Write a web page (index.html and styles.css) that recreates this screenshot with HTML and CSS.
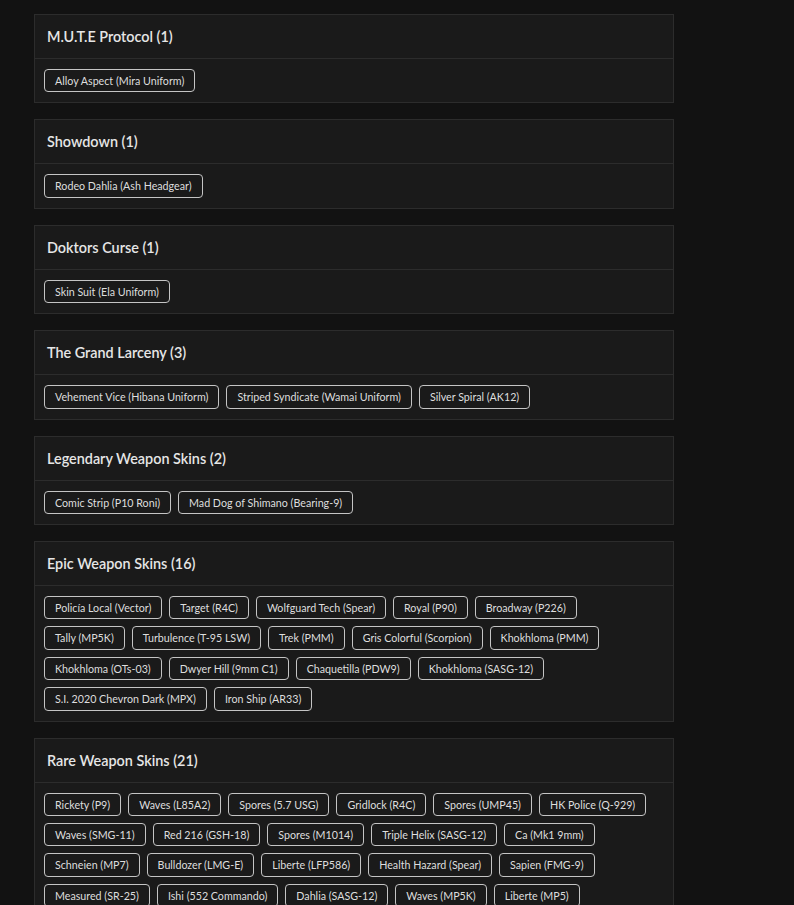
FILE: index.html
```html
<!DOCTYPE html>
<html lang="en">
<head>
    <meta charset="UTF-8">
    <meta name="viewport" content="width=device-width, initial-scale=1.0">
    <title>Item Collection</title>
    <link rel="stylesheet" href="styles.css">
</head>
<body>
    <div class="collection">
        <div class="group">
            <h2 class="group-title">M.U.T.E Protocol (1)</h2>
            <div class="group-items">
                <span class="item">Alloy Aspect (Mira Uniform)</span>
            </div>
        </div>

        <div class="group">
            <h2 class="group-title">Showdown (1)</h2>
            <div class="group-items">
                <span class="item">Rodeo Dahlia (Ash Headgear)</span>
            </div>
        </div>

        <div class="group">
            <h2 class="group-title">Doktors Curse (1)</h2>
            <div class="group-items">
                <span class="item">Skin Suit (Ela Uniform)</span>
            </div>
        </div>

        <div class="group">
            <h2 class="group-title">The Grand Larceny (3)</h2>
            <div class="group-items">
                <span class="item">Vehement Vice (Hibana Uniform)</span>
                <span class="item">Striped Syndicate (Wamai Uniform)</span>
                <span class="item">Silver Spiral (AK12)</span>
            </div>
        </div>

        <div class="group">
            <h2 class="group-title">Legendary Weapon Skins (2)</h2>
            <div class="group-items">
                <span class="item">Comic Strip (P10 Roni)</span>
                <span class="item">Mad Dog of Shimano (Bearing-9)</span>
            </div>
        </div>

        <div class="group">
            <h2 class="group-title">Epic Weapon Skins (16)</h2>
            <div class="group-items">
                <span class="item">Policía Local (Vector)</span>
                <span class="item">Target (R4C)</span>
                <span class="item">Wolfguard Tech (Spear)</span>
                <span class="item">Royal (P90)</span>
                <span class="item">Broadway (P226)</span>
                <span class="item">Tally (MP5K)</span>
                <span class="item">Turbulence (T-95 LSW)</span>
                <span class="item">Trek (PMM)</span>
                <span class="item">Gris Colorful (Scorpion)</span>
                <span class="item">Khokhloma (PMM)</span>
                <span class="item">Khokhloma (OTs-03)</span>
                <span class="item">Dwyer Hill (9mm C1)</span>
                <span class="item">Chaquetilla (PDW9)</span>
                <span class="item">Khokhloma (SASG-12)</span>
                <span class="item">S.I. 2020 Chevron Dark (MPX)</span>
                <span class="item">Iron Ship (AR33)</span>
            </div>
        </div>

        <div class="group">
            <h2 class="group-title">Rare Weapon Skins (21)</h2>
            <div class="group-items">
                <span class="item">Rickety (P9)</span>
                <span class="item">Waves (L85A2)</span>
                <span class="item">Spores (5.7 USG)</span>
                <span class="item">Gridlock (R4C)</span>
                <span class="item">Spores (UMP45)</span>
                <span class="item">HK Police (Q-929)</span>
                <span class="item">Waves (SMG-11)</span>
                <span class="item">Red 216 (GSH-18)</span>
                <span class="item">Spores (M1014)</span>
                <span class="item">Triple Helix (SASG-12)</span>
                <span class="item">Ca (Mk1 9mm)</span>
                <span class="item">Schneien (MP7)</span>
                <span class="item">Bulldozer (LMG-E)</span>
                <span class="item">Liberte (LFP586)</span>
                <span class="item">Health Hazard (Spear)</span>
                <span class="item">Sapien (FMG-9)</span>
                <span class="item">Measured (SR-25)</span>
                <span class="item">Ishi (552 Commando)</span>
                <span class="item">Dahlia (SASG-12)</span>
                <span class="item">Waves (MP5K)</span>
                <span class="item">Liberte (MP5)</span>
            </div>
        </div>
    </div>
</body>
</html>
```

FILE: styles.css
```css
* {
    margin: 0;
    padding: 0;
    box-sizing: border-box;
}

body {
    font-family: Lato, 'Open Sans', sans-serif;
    background: #121212;
    color: #e6e6e6;
}

/* Column of groups */
.collection {
    width: 640px;
    margin-left: 34px;
    padding-top: 14px;
    display: flex;
    flex-direction: column;
    gap: 16px;
}

/* One group card */
.group {
    background: #1a1a1a;
    border: 1px solid #2c2c2c;
}

.group-title {
    height: 44px;
    padding: 0 12px;
    display: flex;
    align-items: center;
    font-size: 14.4px;
    font-weight: 600;
    color: #e6e6e6;
    border-bottom: 1px solid #2c2c2c;
}

.group-items {
    padding: 10px 9px;
    display: flex;
    flex-wrap: wrap;
    gap: 7px;
}

/* Item tag */
.item {
    display: inline-block;
    padding: 4px 10px;
    font-size: 10.7px;
    line-height: 13.4px;
    color: #dedede;
    border: 1px solid #c4c4c4;
    border-radius: 4px;
    white-space: nowrap;
}
```
